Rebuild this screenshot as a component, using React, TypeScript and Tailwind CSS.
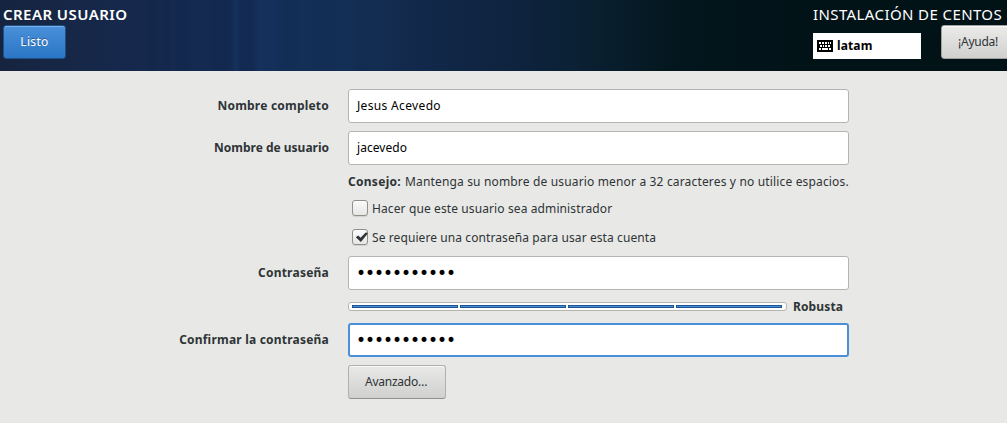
import type { ReactNode } from "react";

const BULLETS = "•".repeat(11);

function Label({ children, className }: { children?: ReactNode; className?: string }) {
  return (
    <span className={`flex w-[329px] shrink-0 justify-end whitespace-nowrap font-bold ${className ?? ""}`}>
      {children}
    </span>
  );
}

function Row({ label, labelClass, children, className }: { label?: string; labelClass?: string; children: ReactNode; className?: string }) {
  return (
    <div className={`flex items-center ${className ?? ""}`}>
      <Label className={labelClass}>{label}</Label>
      <div className="ml-[19px] flex w-[501px] shrink-0 items-center">{children}</div>
    </div>
  );
}

function Field({ children, focused, className }: { children: ReactNode; focused?: boolean; className?: string }) {
  return (
    <div
      className={`flex h-[34px] w-full items-center rounded-[3px] bg-white text-black ${
        focused ? "border-2 border-[#4a90d9] pl-[7px]" : "border border-[#b4b4b0] pl-[8px]"
      } ${className ?? ""}`}
    >
      {children}
    </div>
  );
}

function Dots() {
  return (
    <span className="-ml-px mt-[-1px] font-['DejaVu_Sans',sans-serif] text-[17px] leading-[16px] tracking-[-1.03px]">
      {BULLETS}
    </span>
  );
}

function Checkbox({ checked }: { checked?: boolean }) {
  return (
    <span className="relative ml-[4px] mr-[4px] h-[16px] w-[16px] shrink-0 rounded-[3px] border border-[#91918c] bg-linear-to-b from-[#fbfbfb] to-[#e6e6e5] shadow-[0_1px_0_#d2d2d0]">
      {checked && (
        <svg className="absolute left-[2px] top-[1px]" width="14" height="12" viewBox="0 0 14 12">
          <path d="M0.8 6.2 L3.2 4.6 L5.6 6.8 L11 1.2 L12.8 2.6 L5.9 11 Z" fill="#2e3436" />
        </svg>
      )}
    </span>
  );
}

function KeyboardIcon() {
  return (
    <svg width="16" height="12" viewBox="0 0 16 12" shapeRendering="crispEdges">
      <rect width="16" height="12" rx="1" fill="#000" />
      <path
        fill="#fff"
        d="M2 2h2v2H2zM5 2h2v2H5zM8 2h2v2H8zM11 2h1v2h-1zM13 2h1v2h-1zM3 5h2v2H3zM6 5h1v2H6zM8 5h2v2H8zM11 5h2v2h-2zM2 8h2v2H2zM5 8h6v2H5zM12 8h2v2h-2z"
      />
    </svg>
  );
}

export default function App() {
  return (
    <div className="h-[423px] w-[1007px] overflow-hidden bg-[#e8e8e6] font-['Noto_Sans',sans-serif] text-[12px] leading-[16px] text-[#2e3436]">
      <header className="flex h-[71px] justify-between bg-[linear-gradient(90deg,rgba(12,28,62,0)_145px,rgba(12,28,62,0.18)_152px,rgba(12,28,62,0)_158px,rgba(12,28,62,0.18)_166px,rgba(12,28,62,0)_172px,rgba(12,34,72,0.25)_182px,rgba(12,34,72,0)_196px,rgba(12,30,66,0)_208px,rgba(12,30,66,0.22)_213px,rgba(12,30,66,0.2)_231px,rgba(30,64,112,0.25)_236px,rgba(12,30,66,0.2)_241px,rgba(12,30,66,0.2)_252px,rgba(24,60,106,0.2)_260px,rgba(24,60,106,0)_275px,rgba(12,34,66,0.2)_290px,rgba(12,34,66,0)_300px,rgba(12,34,66,0.12)_330px,rgba(12,34,66,0)_345px,rgba(12,30,72,0.18)_362px,rgba(12,30,72,0)_372px),linear-gradient(90deg,#16243f_0px,#16284a_100px,#142a50_200px,#142f59_270px,#142f55_350px,#12284a_420px,#0f2440_500px,#0b2135_570px,#071c28_630px,#03161d_680px,#021318_800px,#021318_1007px)]">
        <div className="ml-[3px]">
          <h1 className="mt-[4px] h-[21px] whitespace-nowrap text-[15px] font-semibold leading-[20px] tracking-[0.44px] text-white">
            CREAR USUARIO
          </h1>
          <button className="flex h-[34px] w-[63px] items-center justify-center rounded-[3px] border border-[#1c5187] bg-linear-to-b from-[#4a90d9] to-[#2a76c6] tracking-[0.35px] text-white shadow-[inset_0_1px_0_#7db1e6] [text-shadow:0_-1px_0_rgba(0,0,0,0.35)]">
            Listo
          </button>
        </div>
        <div className="w-[195px]">
          <h2 className="ml-[1px] mt-[4px] h-[21px] whitespace-nowrap text-[15px] leading-[20px] tracking-[0.4px] text-white">
            INSTALACIÓN DE CENTOS
          </h2>
          <div className="flex items-end">
            <div className="ml-[1px] flex h-[26px] w-[108px] shrink-0 items-center bg-white pl-[4px] text-black">
              <KeyboardIcon />
              <span className="ml-[4px] font-bold tracking-[0.12px]">latam</span>
            </div>
            <button className="ml-[20px] flex h-[34px] w-[74px] shrink-0 items-center rounded-[3px] border border-[#a1a19d] bg-linear-to-b from-[#ebebea] to-[#d0d0ce] pl-[16px] tracking-[-0.25px] shadow-[inset_0_1px_0_#fafafa]">
              ¡Ayuda!
            </button>
          </div>
        </div>
      </header>

      <main className="pt-[18px]">
        <Row label="Nombre completo" labelClass="tracking-[0.21px]">
          <Field className="tracking-[0.34px]">Jesus Acevedo</Field>
        </Row>
        <Row label="Nombre de usuario" labelClass="tracking-[-0.01px]" className="mt-[8px]">
          <Field className="tracking-[0.05px]">jacevedo</Field>
        </Row>
        <Row className="h-[33px]">
          <span className="whitespace-nowrap tracking-[0.16px]">
            <b className="mr-[4px] tracking-[0.29px]">Consejo:</b>
            Mantenga su nombre de usuario menor a 32 caracteres y no utilice espacios.
          </span>
        </Row>
        <Row className="h-[20px]">
          <Checkbox />
          <span className="whitespace-nowrap pt-[2px] tracking-[0.11px]">Hacer que este usuario sea administrador</span>
        </Row>
        <Row className="mt-[9px] h-[20px]">
          <Checkbox checked />
          <span className="whitespace-nowrap pt-[2px] tracking-[0.09px]">Se requiere una contraseña para usar esta cuenta</span>
        </Row>
        <Row label="Contraseña" labelClass="tracking-[0.23px]" className="mt-[9px]">
          <Field>
            <Dots />
          </Field>
        </Row>
        <Row className="h-[33px]">
          <div className="flex h-[9px] w-[439px] shrink-0 items-center gap-[2px] rounded-[3px] border border-[#b4b4b0] bg-white pl-[3px]">
            {[0, 1, 2, 3].map((i) => (
              <span key={i} className="h-[3px] w-[106px] border border-[#1c5291] bg-[#4a90d9]" />
            ))}
          </div>
          <span className="ml-[6px] font-bold tracking-[0.12px]">Robusta</span>
        </Row>
        <Row label="Confirmar la contraseña" labelClass="tracking-[0.21px]">
          <Field focused>
            <Dots />
          </Field>
        </Row>
        <Row className="mt-[8px]">
          <button className="flex h-[34px] w-[98px] items-center rounded-[3px] border border-[#b0b0ac] border-b-[#91918c] bg-linear-to-b from-[#e9e9e8] to-[#d0d0ce] pl-[16px] tracking-[-0.25px] shadow-[inset_0_1px_0_#fafafa]">
            Avanzado…
          </button>
        </Row>
      </main>
    </div>
  );
}
